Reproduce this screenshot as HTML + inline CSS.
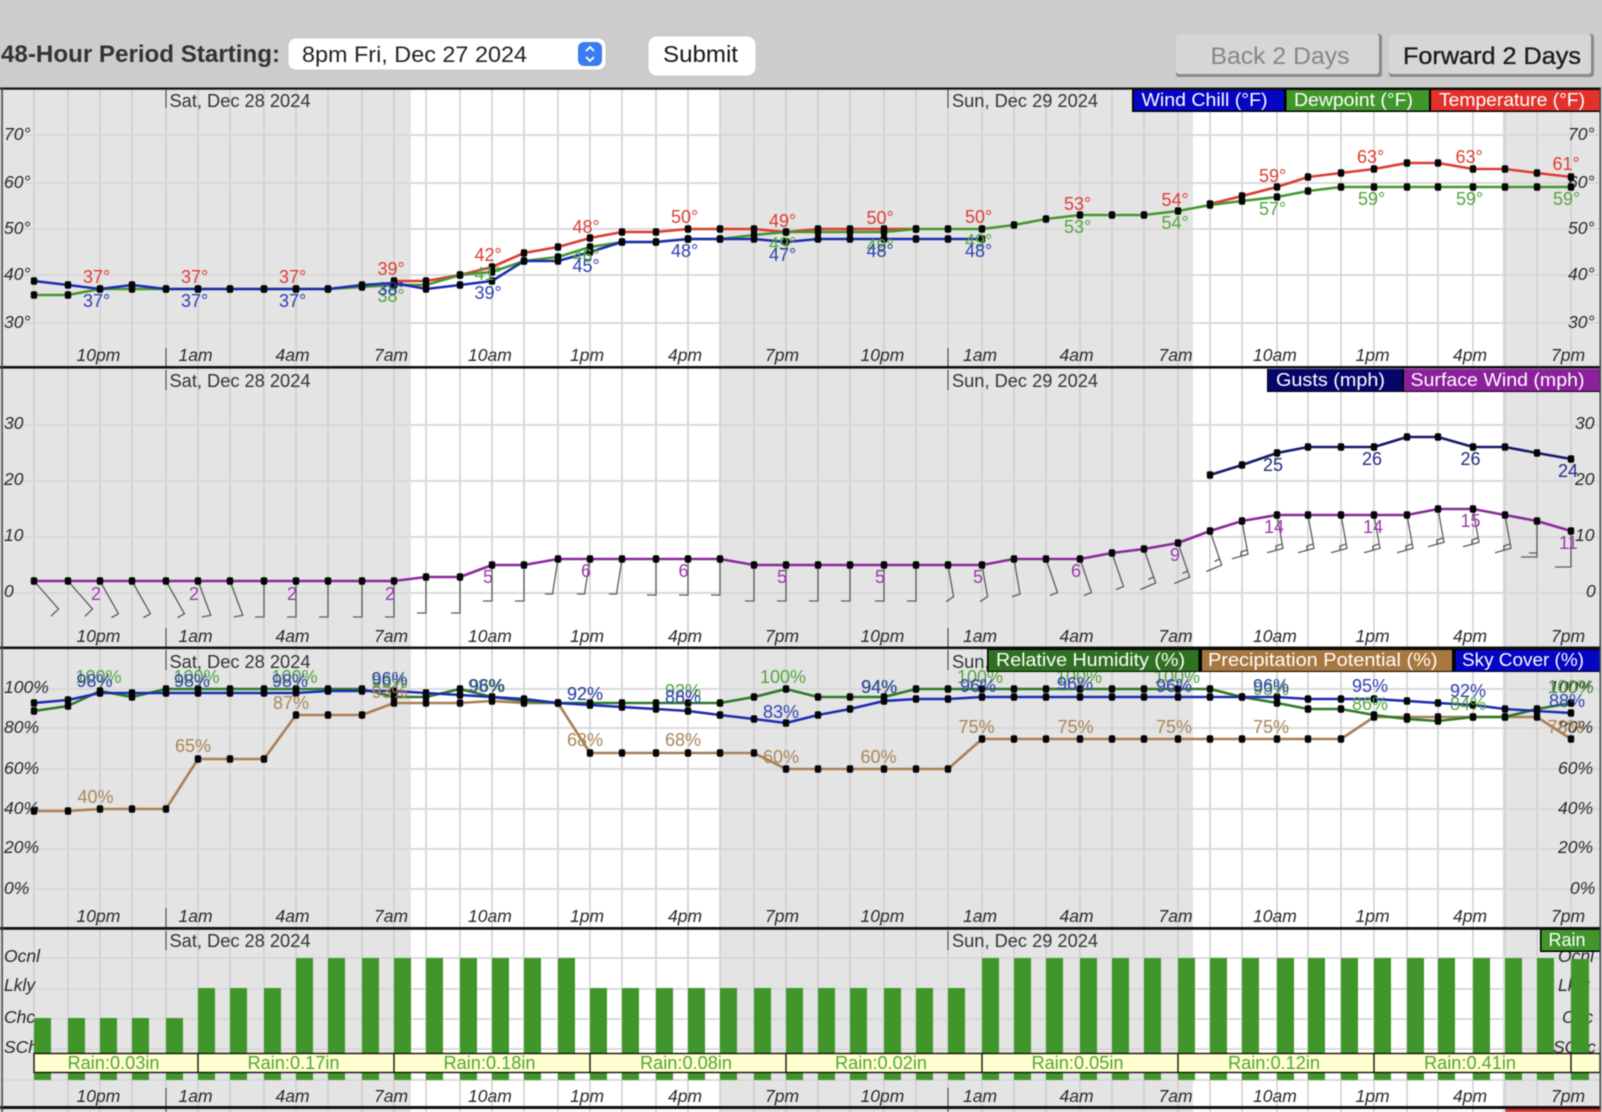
<!DOCTYPE html>
<html lang="en"><head><meta charset="utf-8"><title>48-Hour Forecast</title>
<style>
html,body{margin:0;padding:0;background:#ccc;width:1602px;height:1112px;overflow:hidden}
svg{display:block;position:absolute;left:0;top:0;font-family:"Liberation Sans",Arial,sans-serif;font-size:18px}
.c{filter:blur(.55px)}
.i text{font-style:italic;fill:#2a2a2a;font-size:17.5px}
.w text{fill:#fff;font-size:18.5px}
.r{fill:#dd3c34}.g{fill:#52a53c}.b{fill:#2f3fb4}.br{fill:#aa8558}.p{fill:#9c38ad}.n{fill:#232c80}
.l{fill:none;stroke-width:2.6;stroke-linejoin:round;marker-start:url(#d);marker-mid:url(#d);marker-end:url(#d)}
.t{fill:#333}
</style></head><body>
<svg width="1602" height="1112" viewBox="0 0 1602 1112" xmlns="http://www.w3.org/2000/svg">
<defs>
<marker id="d" markerUnits="userSpaceOnUse" markerWidth="8" markerHeight="9" refX="4" refY="4.5"><rect x=".8" y=".8" width="6.4" height="7.4" rx="1.8" fill="#050505"/></marker>
<g id="ba"><path d="M0 0l24.5 28l-7.6 7.3"/></g>
<g id="bb"><path d="M0 0l18.4 32.7l-7 4"/></g>
<g id="bc"><path d="M0 0l12.8 34.3l-9 1.7"/></g>
<g id="bd"><path d="M0 0v36h-9"/></g>
<g id="be"><path d="M0 0l-5.5 35h-7.6"/></g>
<g id="bf"><path d="M0 0l5.6 31.7l-7.6 5"/></g>
<g id="bg"><path d="M0 0l6 35l-8 2.7"/></g>
<g id="bh"><path d="M0 0l11.5 33.5l-7.6 3"/></g>
<g id="bj"><path d="M0 0l11.7 34l-15.3 6.5M9.5 28l-5 2.5"/></g>
<g id="bk"><path d="M0 0l6 33.3l-16 4.5M5 29l-6 2v4"/></g>
<g id="bl"><path d="M0 0v36h-16M0 32h-8"/></g>
<g id="bm"><path d="M0 0v36h-16"/></g>
</defs>

<rect width="1602" height="1112" fill="#ccc"/>

<g class="c">
<!-- header -->
<text x="1" y="62" font-size="24" font-weight="bold" fill="#333" textLength="279" lengthAdjust="spacingAndGlyphs">48-Hour Period Starting:</text>
<rect x="288" y="38" width="318" height="32" rx="8" fill="#fff" stroke="#c2c2c2" stroke-width=".7"/>
<text x="302" y="62" font-size="22.5" fill="#222" textLength="225" lengthAdjust="spacingAndGlyphs">8pm Fri, Dec 27 2024</text>
<rect x="578" y="42" width="24" height="24" rx="6" fill="#3a7df0"/>
<path d="M586 51l4-4l4 4M586 57l4 4l4-4" fill="none" stroke="#fff" stroke-width="1.8"/>
<rect x="648" y="36" width="108" height="40" rx="9" fill="#fff" stroke="#c2c2c2" stroke-width=".7"/>
<text x="663" y="62" font-size="23" fill="#151515" textLength="75" lengthAdjust="spacingAndGlyphs">Submit</text>

<rect x="1176" y="34" width="206" height="43" rx="3" fill="#8a8a8a"/>
<rect x="1176" y="34" width="203" height="40" rx="3" fill="#d6d6d6"/>
<text x="1210.5" y="64" font-size="24" fill="#868686" textLength="139" lengthAdjust="spacingAndGlyphs">Back 2 Days</text>
<rect x="1389" y="34" width="205" height="43" rx="3" fill="#8a8a8a"/>
<rect x="1389" y="34" width="202" height="40" rx="3" fill="#d6d6d6"/>
<text x="1403" y="64" font-size="24" fill="#1c1c1c" stroke="#1c1c1c" stroke-width=".35" textLength="178" lengthAdjust="spacingAndGlyphs">Forward 2 Days</text>

<!-- shaded backgrounds -->
<rect x="2" y="89" width="1598" height="1023" fill="#fff"/>
<rect x="2" y="89" width="409" height="1023" fill="#e4e4e4"/>
<rect x="719.5" y="89" width="473.5" height="1023" fill="#e4e4e4"/>
<rect x="1502.5" y="89" width="97.5" height="1023" fill="#e4e4e4"/>

<!-- vertical grid -->
<path d="M34 89V1112M68 89V1112M100 89V1112M132 89V1112M166 89V1112M198 89V1112M230 89V1112M264 89V1112M296 89V1112M328 89V1112M362 89V1112M394 89V1112M426 89V1112M460 89V1112M492 89V1112M524 89V1112M558 89V1112M590 89V1112M622 89V1112M656 89V1112M688 89V1112M720 89V1112M754 89V1112M786 89V1112M818 89V1112M850 89V1112M884 89V1112M916 89V1112M948 89V1112M982 89V1112M1014 89V1112M1046 89V1112M1080 89V1112M1112 89V1112M1144 89V1112M1178 89V1112M1210 89V1112M1242 89V1112M1277 89V1112M1308 89V1112M1341 89V1112M1374 89V1112M1407 89V1112M1438 89V1112M1473 89V1112M1505 89V1112M1537 89V1112M1571 89V1112" stroke="#cdcdcd" stroke-width="1.5" fill="none"/>
<!-- horizontal grid -->
<path d="M3 135H1600M3 183H1600M3 229H1600M3 275H1600M3 323H1600M3 425H1600M3 481H1600M3 537H1600M3 593H1600M3 689H1600M3 728H1600M3 769H1600M3 809H1600M3 849H1600M3 889H1600M3 958H1600M3 989H1600M3 1019H1600M3 1049H1600M3 1080H1600" stroke="#d6d6d6" stroke-width="1.8" fill="none"/>

<!-- day ticks -->
<path d="M166 90V108M166 348V367M948 90V108M948 348V367M166 370V390M166 628V647M948 370V390M948 628V647M166 650V670M166 908V927M948 650V670M166 931V950M166 1088V1107M948 931V950M948 1088V1107M166 1109V1112M948 1109V1112" stroke="#555" stroke-width="1.2" fill="none"/>

<!-- CHART 1 -->
<g class="t">
<text x="169.5" y="107" textLength="141" lengthAdjust="spacingAndGlyphs">Sat, Dec 28 2024</text>
<text x="952" y="107" textLength="146" lengthAdjust="spacingAndGlyphs">Sun, Dec 29 2024</text>
<text x="169.5" y="387" textLength="141" lengthAdjust="spacingAndGlyphs">Sat, Dec 28 2024</text>
<text x="952" y="387" textLength="146" lengthAdjust="spacingAndGlyphs">Sun, Dec 29 2024</text>
<text x="169.5" y="668" textLength="141" lengthAdjust="spacingAndGlyphs">Sat, Dec 28 2024</text>
<text x="952" y="668" textLength="146" lengthAdjust="spacingAndGlyphs">Sun, Dec 29 2024</text>
<text x="169.5" y="947" textLength="141" lengthAdjust="spacingAndGlyphs">Sat, Dec 28 2024</text>
<text x="952" y="947" textLength="146" lengthAdjust="spacingAndGlyphs">Sun, Dec 29 2024</text>
</g>
<g class="i">
<text x="4" y="140">70°</text><text x="4" y="188">60°</text><text x="4" y="234">50°</text><text x="4" y="280">40°</text><text x="4" y="328">30°</text>
<text x="1568" y="140">70°</text><text x="1568" y="188">60°</text><text x="1568" y="234">50°</text><text x="1568" y="280">40°</text><text x="1568" y="328">30°</text>
<text x="4" y="429">30</text><text x="4" y="485">20</text><text x="4" y="541">10</text><text x="4" y="597">0</text>
<text x="1575" y="429">30</text><text x="1575" y="485">20</text><text x="1575" y="541">10</text><text x="1586" y="597">0</text>
<text x="4" y="693">100%</text><text x="4" y="733">80%</text><text x="4" y="774">60%</text><text x="4" y="814">40%</text><text x="4" y="853">20%</text><text x="4" y="894">0%</text>
<text x="1549" y="693">100%</text><text x="1558" y="733">80%</text><text x="1558" y="774">60%</text><text x="1558" y="814">40%</text><text x="1558" y="853">20%</text><text x="1570" y="894">0%</text>
<text x="4" y="962">Ocnl</text><text x="4" y="991">Lkly</text><text x="4" y="1023">Chc</text><text x="4" y="1053">SChc</text>
<text x="1558" y="962">Ocnl</text><text x="1558" y="991">Lkly</text><text x="1562" y="1023">Chc</text><text x="1553" y="1053">SChc</text>

<text x="76.5" y="361">10pm</text><text x="178.5" y="361">1am</text><text x="275.5" y="361">4am</text><text x="374" y="361">7am</text><text x="468" y="361">10am</text><text x="570" y="361">1pm</text><text x="668" y="361">4pm</text><text x="765" y="361">7pm</text><text x="860.5" y="361">10pm</text><text x="963" y="361">1am</text><text x="1059.5" y="361">4am</text><text x="1158.5" y="361">7am</text><text x="1253" y="361">10am</text><text x="1355.5" y="361">1pm</text><text x="1453" y="361">4pm</text><text x="1551" y="361">7pm</text>

<text x="76.5" y="642">10pm</text><text x="178.5" y="642">1am</text><text x="275.5" y="642">4am</text><text x="374" y="642">7am</text><text x="468" y="642">10am</text><text x="570" y="642">1pm</text><text x="668" y="642">4pm</text><text x="765" y="642">7pm</text><text x="860.5" y="642">10pm</text><text x="963" y="642">1am</text><text x="1059.5" y="642">4am</text><text x="1158.5" y="642">7am</text><text x="1253" y="642">10am</text><text x="1355.5" y="642">1pm</text><text x="1453" y="642">4pm</text><text x="1551" y="642">7pm</text>

<text x="76.5" y="922">10pm</text><text x="178.5" y="922">1am</text><text x="275.5" y="922">4am</text><text x="374" y="922">7am</text><text x="468" y="922">10am</text><text x="570" y="922">1pm</text><text x="668" y="922">4pm</text><text x="765" y="922">7pm</text><text x="860.5" y="922">10pm</text><text x="963" y="922">1am</text><text x="1059.5" y="922">4am</text><text x="1158.5" y="922">7am</text><text x="1253" y="922">10am</text><text x="1355.5" y="922">1pm</text><text x="1453" y="922">4pm</text><text x="1551" y="922">7pm</text>

<text x="76.5" y="1102">10pm</text><text x="178.5" y="1102">1am</text><text x="275.5" y="1102">4am</text><text x="374" y="1102">7am</text><text x="468" y="1102">10am</text><text x="570" y="1102">1pm</text><text x="668" y="1102">4pm</text><text x="765" y="1102">7pm</text><text x="860.5" y="1102">10pm</text><text x="963" y="1102">1am</text><text x="1059.5" y="1102">4am</text><text x="1158.5" y="1102">7am</text><text x="1253" y="1102">10am</text><text x="1355.5" y="1102">1pm</text><text x="1453" y="1102">4pm</text><text x="1551" y="1102">7pm</text>
</g>

<polyline class="l" stroke="#dd3c34" points="394,281 426,281 460,275 492,267 524,253 558,247 590,238 622,232 656,232 688,229 720,229 754,229 786,232 818,229 850,229 884,229 916,229"/>
<polyline class="l" stroke="#dd3c34" points="1210,204 1242,196 1277,187 1308,177 1341,173 1374,169 1407,163 1438,163 1473,169 1505,169 1537,173 1571,177"/>
<polyline class="l" stroke="#46962f" points="34,295 68,295 100,289 132,289 166,289 198,289 230,289 264,289 296,289 328,289 362,287 394,285 426,285 460,275 492,272 524,261 558,257 590,247 622,242 656,242 688,239 720,239 754,235 786,232 818,232 850,232 884,232 916,229 948,229 982,229 1014,225 1046,219 1080,215 1112,215 1144,215 1178,211 1210,205 1242,201 1277,197 1308,191 1341,187 1374,187 1407,187 1438,187 1473,187 1505,187 1537,187 1571,187"/>
<polyline class="l" stroke="#1d2cb0" points="34,281 68,285 100,289 132,285 166,289 198,289 230,289 264,289 296,289 328,289 362,285 394,283 426,289 460,285 492,281 524,261 558,261 590,252 622,242 656,242 688,239 720,239 754,239 786,242 818,239 850,239 884,239 916,239 948,239 982,239"/>

<g class="r"><text x="83" y="283">37°</text><text x="181" y="283">37°</text><text x="279" y="283">37°</text><text x="377.5" y="275">39°</text><text x="474.5" y="261">42°</text><text x="572.5" y="233">48°</text><text x="671" y="223">50°</text><text x="769" y="227">49°</text><text x="866.5" y="224">50°</text><text x="965" y="223">50°</text><text x="1064" y="210">53°</text><text x="1161.5" y="206">54°</text><text x="1259" y="182">59°</text><text x="1357" y="163">63°</text><text x="1455.5" y="163">63°</text><text x="1552.5" y="170">61°</text></g>
<g class="g"><text x="377.5" y="302">38°</text><text x="474.5" y="280">41°</text><text x="572.5" y="262">46°</text><text x="769" y="250">49°</text><text x="866.5" y="252">49°</text><text x="965" y="247">49°</text><text x="1064" y="233">53°</text><text x="1161.5" y="229">54°</text><text x="1259" y="215">57°</text><text x="1358" y="205">59°</text><text x="1456" y="205">59°</text><text x="1553" y="205">59°</text></g>
<g class="b"><text x="83" y="307">37°</text><text x="181" y="307">37°</text><text x="279" y="307">37°</text><text x="377.5" y="295">38°</text><text x="474.5" y="299">39°</text><text x="572.5" y="272">45°</text><text x="671" y="257">48°</text><text x="769" y="261">47°</text><text x="866.5" y="257">48°</text><text x="965" y="257">48°</text></g>

<!-- legend 1 -->
<rect x="1132" y="89" width="468" height="23" fill="#000"/>
<rect x="1134" y="90" width="150" height="20.5" fill="#0505c4"/>
<rect x="1286.5" y="90" width="142.5" height="20.5" fill="#3f962a"/>
<rect x="1431" y="90" width="169" height="20.5" fill="#e2312a"/>
<g class="w"><text x="1141.5" y="106" textLength="126" lengthAdjust="spacingAndGlyphs">Wind Chill (°F)</text><text x="1294" y="106" textLength="119" lengthAdjust="spacingAndGlyphs">Dewpoint (°F)</text><text x="1439" y="106" textLength="146" lengthAdjust="spacingAndGlyphs">Temperature (°F)</text></g>

<!-- CHART 2 barbs -->
<g stroke="#5c5c5c" stroke-width="1.3" fill="none">
<use href="#ba" x="34" y="581"/><use href="#ba" x="68" y="581"/><use href="#bb" x="100" y="581"/><use href="#bb" x="132" y="581"/><use href="#bb" x="166" y="581"/><use href="#bc" x="198" y="581"/><use href="#bc" x="230" y="581"/><use href="#bd" x="264" y="581"/><use href="#bd" x="296" y="581"/><use href="#bd" x="328" y="581"/><use href="#bd" x="362" y="581"/><use href="#bd" x="394" y="581"/><use href="#bd" x="426" y="577"/><use href="#bd" x="460" y="577"/><use href="#bd" x="492" y="565"/><use href="#bd" x="524" y="565"/><use href="#be" x="558" y="559"/><use href="#be" x="590" y="559"/><use href="#be" x="622" y="559"/><use href="#bd" x="656" y="559"/><use href="#bd" x="688" y="559"/><use href="#bd" x="720" y="559"/><use href="#bd" x="754" y="565"/><use href="#bd" x="786" y="565"/><use href="#bd" x="818" y="565"/><use href="#bd" x="850" y="565"/><use href="#bd" x="884" y="565"/><use href="#bd" x="916" y="565"/><use href="#bf" x="948" y="565"/><use href="#bf" x="982" y="565"/><use href="#bg" x="1014" y="559"/><use href="#bh" x="1046" y="559"/><use href="#bh" x="1080" y="559"/><use href="#bh" x="1112" y="553"/><use href="#bj" x="1144" y="549"/><use href="#bj" x="1178" y="543"/><use href="#bj" x="1210" y="531"/><use href="#bk" x="1242" y="521"/><use href="#bk" x="1277" y="515"/><use href="#bk" x="1308" y="515"/><use href="#bk" x="1341" y="515"/><use href="#bk" x="1374" y="515"/><use href="#bk" x="1407" y="515"/><use href="#bk" x="1438" y="509"/><use href="#bk" x="1473" y="509"/><use href="#bk" x="1505" y="515"/><use href="#bl" x="1537" y="521"/><use href="#bm" x="1571" y="531"/>
</g>
<polyline class="l" stroke="#8a2a9a" points="34,581 68,581 100,581 132,581 166,581 198,581 230,581 264,581 296,581 328,581 362,581 394,581 426,577 460,577 492,565 524,565 558,559 590,559 622,559 656,559 688,559 720,559 754,565 786,565 818,565 850,565 884,565 916,565 948,565 982,565 1014,559 1046,559 1080,559 1112,553 1144,549 1178,543 1210,531 1242,521 1277,515 1308,515 1341,515 1374,515 1407,515 1438,509 1473,509 1505,515 1537,521 1571,531"/>
<polyline class="l" stroke="#151a6a" points="1210,475 1242,465 1277,453 1308,447 1341,447 1374,447 1407,437 1438,437 1473,447 1505,447 1537,453 1571,459"/>
<g class="p"><text x="91" y="600">2</text><text x="189" y="600">2</text><text x="287" y="600">2</text><text x="385" y="600">2</text><text x="483" y="583">5</text><text x="581" y="577">6</text><text x="678.5" y="577">6</text><text x="777" y="583">5</text><text x="875" y="583">5</text><text x="973" y="583">5</text><text x="1071" y="577">6</text><text x="1170" y="561">9</text><text x="1264" y="533">14</text><text x="1363" y="533">14</text><text x="1460.5" y="527">15</text><text x="1559" y="549">11</text></g>
<g class="n"><text x="1263" y="471">25</text><text x="1362" y="465">26</text><text x="1460.5" y="465">26</text><text x="1558" y="477">24</text></g>
<rect x="1267" y="369" width="333" height="23" fill="#000"/>
<rect x="1268" y="369" width="134" height="22" fill="#06066a"/>
<rect x="1404" y="369" width="196" height="22" fill="#8b1f9c"/>
<g class="w"><text x="1276" y="386" textLength="109" lengthAdjust="spacingAndGlyphs">Gusts (mph)</text><text x="1410.5" y="386" textLength="174" lengthAdjust="spacingAndGlyphs">Surface Wind (mph)</text></g>

<!-- CHART 3 -->
<polyline class="l" stroke="#a97f55" stroke-width="2.2" points="34,811 68,811 100,809 132,809 166,809 198,759 230,759 264,759 296,715 328,715 362,715 394,703 426,703 460,703 492,701 524,703 558,703 590,753 622,753 656,753 688,753 720,753 754,753 786,769 818,769 850,769 884,769 916,769 948,769 982,739 1014,739 1046,739 1080,739 1112,739 1144,739 1178,739 1210,739 1242,739 1277,739 1308,739 1341,739 1374,717 1407,717 1438,717 1473,717 1505,717 1537,717 1571,739"/>
<polyline class="l" stroke="#2d7a28" points="34,711 68,706 100,691 132,697 166,689 198,689 230,689 264,689 296,689 328,689 362,689 394,697 426,697 460,689 492,697 524,701 558,703 590,703 622,703 656,703 688,703 720,703 754,697 786,689 818,697 850,697 884,697 916,689 948,689 982,689 1014,689 1046,689 1080,689 1112,689 1144,689 1178,689 1210,689 1242,697 1277,703 1308,709 1341,709 1374,715 1407,719 1438,721 1473,717 1505,717 1537,709 1571,703"/>
<polyline class="l" stroke="#1d2cb0" points="34,703 68,700 100,693 132,693 166,693 198,693 230,693 264,693 296,693 328,691 362,691 394,691 426,693 460,695 492,697 524,699 558,703 590,705 622,707 656,709 688,711 720,715 754,719 786,723 818,715 850,709 884,701 916,699 948,699 982,697 1014,697 1046,697 1080,697 1112,697 1144,697 1178,697 1210,697 1242,697 1277,697 1308,699 1341,699 1374,699 1407,701 1438,703 1473,705 1505,709 1537,711 1571,713"/>
<g class="br"><text x="77.5" y="803">40%</text><text x="175" y="752">65%</text><text x="273" y="709">87%</text><text x="371.5" y="698">93%</text><text x="567" y="746">68%</text><text x="665" y="746">68%</text><text x="763" y="763">60%</text><text x="860.5" y="763">60%</text><text x="958.5" y="733">75%</text><text x="1057.5" y="733">75%</text><text x="1156" y="733">75%</text><text x="1253" y="733">75%</text><text x="1547.5" y="733">78%</text></g>
<g class="g"><text x="75.5" y="683">100%</text><text x="173.5" y="683">100%</text><text x="271.5" y="683">100%</text><text x="371.5" y="688">96%</text><text x="468" y="692">98%</text><text x="567" y="700">92%</text><text x="665" y="697">92%</text><text x="760" y="683">100%</text><text x="861.5" y="693">94%</text><text x="957" y="683">100%</text><text x="1056" y="683">100%</text><text x="1154" y="683">100%</text><text x="1253" y="695">93%</text><text x="1352" y="710">86%</text><text x="1450" y="710">84%</text><text x="1547.5" y="693">100%</text></g>
<g class="b"><text x="76.5" y="687">98%</text><text x="174" y="687">98%</text><text x="272" y="687">98%</text><text x="371.5" y="685">96%</text><text x="469" y="692">96%</text><text x="567" y="700">92%</text><text x="665" y="703">88%</text><text x="763" y="718">83%</text><text x="861" y="693">94%</text><text x="960" y="692">96%</text><text x="1057" y="690">96%</text><text x="1156" y="692">96%</text><text x="1253" y="692">96%</text><text x="1352" y="692">95%</text><text x="1450" y="697">92%</text><text x="1549" y="707">88%</text></g>
<rect x="987" y="649" width="613" height="23" fill="#000"/>
<rect x="988.5" y="650" width="210" height="21" fill="#2f7022"/>
<rect x="1202" y="650" width="250" height="21" fill="#a8773f"/>
<rect x="1455.5" y="650" width="144.5" height="21" fill="#0505c4"/>
<g class="w"><text x="996" y="666" textLength="189" lengthAdjust="spacingAndGlyphs">Relative Humidity (%)</text><text x="1208" y="666" textLength="229.5" lengthAdjust="spacingAndGlyphs">Precipitation Potential (%)</text><text x="1462" y="666" textLength="122" lengthAdjust="spacingAndGlyphs">Sky Cover (%)</text></g>

<!-- CHART 4 bars -->
<path fill="#40962a" d="M34 1018h17V1080h-17zM68 1018h17V1080h-17zM100 1018h17V1080h-17zM132 1018h17V1080h-17zM166 1018h17V1080h-17zM198 988h17V1080h-17zM230 988h17V1080h-17zM264 988h17V1080h-17zM296 958h17V1080h-17zM328 958h17V1080h-17zM362 958h17V1080h-17zM394 958h17V1080h-17zM426 958h17V1080h-17zM460 958h17V1080h-17zM492 958h17V1080h-17zM524 958h17V1080h-17zM558 958h17V1080h-17zM590 988h17V1080h-17zM622 988h17V1080h-17zM656 988h17V1080h-17zM688 988h17V1080h-17zM720 988h17V1080h-17zM754 988h17V1080h-17zM786 988h17V1080h-17zM818 988h17V1080h-17zM850 988h17V1080h-17zM884 988h17V1080h-17zM916 988h17V1080h-17zM948 988h17V1080h-17zM982 958h17V1080h-17zM1014 958h17V1080h-17zM1046 958h17V1080h-17zM1080 958h17V1080h-17zM1112 958h17V1080h-17zM1144 958h17V1080h-17zM1178 958h17V1080h-17zM1210 958h17V1080h-17zM1242 958h17V1080h-17zM1277 958h17V1080h-17zM1308 958h17V1080h-17zM1341 958h17V1080h-17zM1374 958h17V1080h-17zM1407 958h17V1080h-17zM1438 958h17V1080h-17zM1473 958h17V1080h-17zM1505 958h17V1080h-17zM1537 958h17V1080h-17zM1571 959h18V1080h-18z"/>
<rect x="34" y="1053.5" width="1566" height="19" fill="#ffffcf" stroke="#111" stroke-width="1.4"/>
<path d="M198 1053V1073M394 1053V1073M590 1053V1073M786 1053V1073M982 1053V1073M1178 1053V1073M1374 1053V1073M1571 1053V1073" stroke="#111" stroke-width="1.4"/>
<g class="g"><text x="67.5" y="1069" textLength="92" lengthAdjust="spacingAndGlyphs">Rain:0.03in</text><text x="247.5" y="1069" textLength="92" lengthAdjust="spacingAndGlyphs">Rain:0.17in</text><text x="443.5" y="1069" textLength="92" lengthAdjust="spacingAndGlyphs">Rain:0.18in</text><text x="640" y="1069" textLength="92" lengthAdjust="spacingAndGlyphs">Rain:0.08in</text><text x="835" y="1069" textLength="92" lengthAdjust="spacingAndGlyphs">Rain:0.02in</text><text x="1031.5" y="1069" textLength="92" lengthAdjust="spacingAndGlyphs">Rain:0.05in</text><text x="1228" y="1069" textLength="92" lengthAdjust="spacingAndGlyphs">Rain:0.12in</text><text x="1424" y="1069" textLength="92" lengthAdjust="spacingAndGlyphs">Rain:0.41in</text></g>
<rect x="1540" y="929.5" width="60" height="22.5" fill="#000"/>
<rect x="1541.5" y="930" width="58.5" height="20.5" fill="#40962a"/>
<g class="w"><text x="1548.5" y="946" textLength="37" lengthAdjust="spacingAndGlyphs">Rain</text></g>

<!-- borders -->
<rect x="0" y="87.5" width="1601" height="2.2" fill="#111"/>
<rect x="0" y="366" width="1601" height="2.6" fill="#111"/>
<rect x="0" y="646.5" width="1601" height="2.6" fill="#111"/>
<rect x="0" y="927" width="1601" height="2.8" fill="#111"/>
<rect x="0" y="1106" width="1601" height="3" fill="#111"/>
<rect x="1.5" y="88" width="1.4" height="1024" fill="#444"/>
<rect x="1599.5" y="88" width="1.4" height="1024" fill="#444"/>
<rect x="1505.5" y="1109" width="95" height="3" fill="#d8302a"/>
</g>
</svg>
</body></html>
